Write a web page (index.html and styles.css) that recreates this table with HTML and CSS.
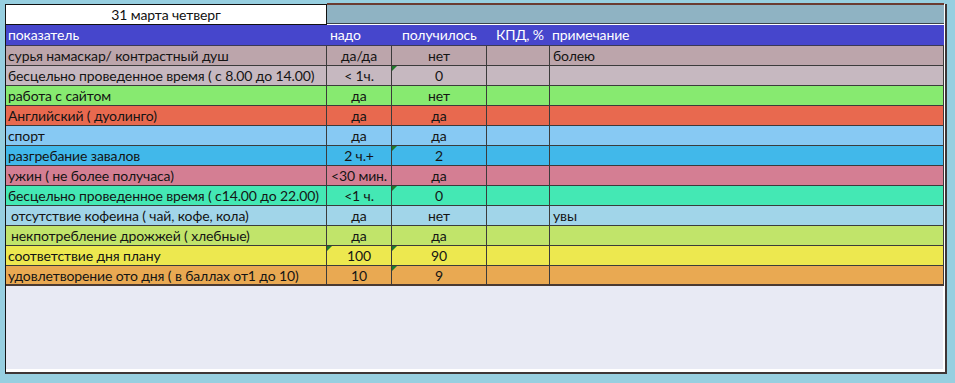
FILE: index.html
```html
<!DOCTYPE html>
<html lang="ru">
<head>
<meta charset="utf-8">
<title>31 марта четверг</title>
<link rel="stylesheet" href="styles.css">
</head>
<body>
<div class="sheet">
  <div class="grid">
    <div class="title">31 марта четверг</div>
    <div class="title-fill"></div>

    <div class="hd c1">показатель</div>
    <div class="hd hd2">надо</div>
    <div class="hd hd3">получилось</div>
    <div class="hd hd4">КПД, %</div>
    <div class="hd hd5">примечание</div>

    <div class="row r1">
      <div class="c c1">сурья намаскар/ контрастный душ</div><div class="c cc">да/да</div><div class="c cc">нет</div><div class="c"></div><div class="c cl">болею</div>
    </div>
    <div class="row r2">
      <div class="c c1">бесцельно проведенное время ( с 8.00 до 14.00)</div><div class="c cc">&lt; 1ч.</div><div class="c cc mark">0</div><div class="c"></div><div class="c cl"></div>
    </div>
    <div class="row r3">
      <div class="c c1">работа с сайтом</div><div class="c cc">да</div><div class="c cc">нет</div><div class="c"></div><div class="c cl"></div>
    </div>
    <div class="row r4">
      <div class="c c1">Английский ( дуолинго)</div><div class="c cc">да</div><div class="c cc">да</div><div class="c"></div><div class="c cl"></div>
    </div>
    <div class="row r5">
      <div class="c c1">спорт</div><div class="c cc">да</div><div class="c cc">да</div><div class="c"></div><div class="c cl"></div>
    </div>
    <div class="row r6">
      <div class="c c1">разгребание завалов</div><div class="c cc">2 ч.+</div><div class="c cc mark">2</div><div class="c"></div><div class="c cl"></div>
    </div>
    <div class="row r7">
      <div class="c c1">ужин ( не более получаса)</div><div class="c cc">&lt;30 мин.</div><div class="c cc">да</div><div class="c"></div><div class="c cl"></div>
    </div>
    <div class="row r8">
      <div class="c c1">бесцельно проведенное время ( с14.00 до 22.00)</div><div class="c cc">&lt;1 ч.</div><div class="c cc mark">0</div><div class="c"></div><div class="c cl"></div>
    </div>
    <div class="row r9">
      <div class="c c1 ind">отсутствие кофеина ( чай, кофе, кола)</div><div class="c cc">да</div><div class="c cc">нет</div><div class="c"></div><div class="c cl">увы</div>
    </div>
    <div class="row r10">
      <div class="c c1 ind">некпотребление дрожжей ( хлебные)</div><div class="c cc">да</div><div class="c cc">да</div><div class="c"></div><div class="c cl"></div>
    </div>
    <div class="row r11">
      <div class="c c1">соответствие дня плану</div><div class="c cc mark">100</div><div class="c cc mark">90</div><div class="c"></div><div class="c cl"></div>
    </div>
    <div class="row r12 last">
      <div class="c c1">удовлетворение ото дня ( в баллах от1 до 10)</div><div class="c cc">10</div><div class="c cc mark">9</div><div class="c"></div><div class="c cl"></div>
    </div>
  </div>
  <div class="empty"></div>
</div>
</body>
</html>
```

FILE: styles.css
```css
html, body {
  margin: 0;
  padding: 0;
}
body {
  background: #97cfe0;
  font-family: Lato, "Open Sans", sans-serif;
  font-size: 14px;
  letter-spacing: -0.12px;
  color: #141414;
  height: 383px;
  overflow: hidden;
}
.sheet {
  margin: 4px 0 0 5px;
  width: 938px;
  height: 366px;
  border-left: 1px solid #151515;
  border-right: 2px solid #3e3636;
  border-bottom: 2px solid #3e3636;
  padding: 0 1px 2px 0;
  background: #ffffff;
  display: flex;
  flex-direction: column;
}
.grid {
  display: grid;
  grid-template-columns: 321px 65px 95px 63px 394px;
}
.title {
  height: 19px;
  border: 1px solid #111;
  border-left: none;
  background: #ffffff;
  text-align: center;
  line-height: 19px;
  color: #111;
}
.title-fill {
  grid-column: 2 / 6;
  background: #8fb3c3;
  border-top: 2px solid #6a3c32;
  border-bottom: 1px solid #3b4348;
  margin-top: -1px;
  height: 18px;
}
.hd {
  background: #4646cc;
  color: #ffffff;
  height: 20px;
  line-height: 20px;
  border-bottom: 1px solid #3a3a55;
  white-space: nowrap;
}
.hd.c1 {
  padding-left: 2px;
}
.hd2 {
  padding-left: 3px;
}
.hd3 {
  padding-left: 10px;
}
.hd4 {
  padding-left: 9px;
}
.hd5 {
  padding-left: 2px;
}
.row {
  display: contents;
}
.c {
  height: 19px;
  line-height: 19px;
  border-right: 1px solid #3b3b3b;
  border-bottom: 1px solid #3b3b3b;
  white-space: nowrap;
  overflow: hidden;
  position: relative;
}
.c1 {
  padding-left: 2px;
}
.c1.ind {
  padding-left: 5px;
}
.cc {
  text-align: center;
}
.cl {
  padding-left: 3px;
}
.last .c {
  height: 18px;
  border-bottom: 2px solid #4a3a32;
}
.mark::before {
  content: "";
  position: absolute;
  left: 0;
  top: 0;
  border-top: 5px solid #1f7a2a;
  border-right: 5px solid transparent;
}
.r1 .c { background: #bca5ab; }
.r2 .c { background: #c6b8c0; }
.r3 .c { background: #87ea70; }
.r4 .c { background: #e8694f; }
.r5 .c { background: #87c9f3; }
.r6 .c { background: #41b8ea; }
.r7 .c { background: #d47e93; }
.r8 .c { background: #44e8b4; }
.r9 .c { background: #a1d5e9; }
.r10 .c { background: #c1e46a; }
.r11 .c { background: #ede84f; }
.r12 .c { background: #e9a952; }
.empty {
  flex: 1;
  background: #e8eaf4;
  margin-bottom: 1px;
  margin-right: 1px;
}
```
